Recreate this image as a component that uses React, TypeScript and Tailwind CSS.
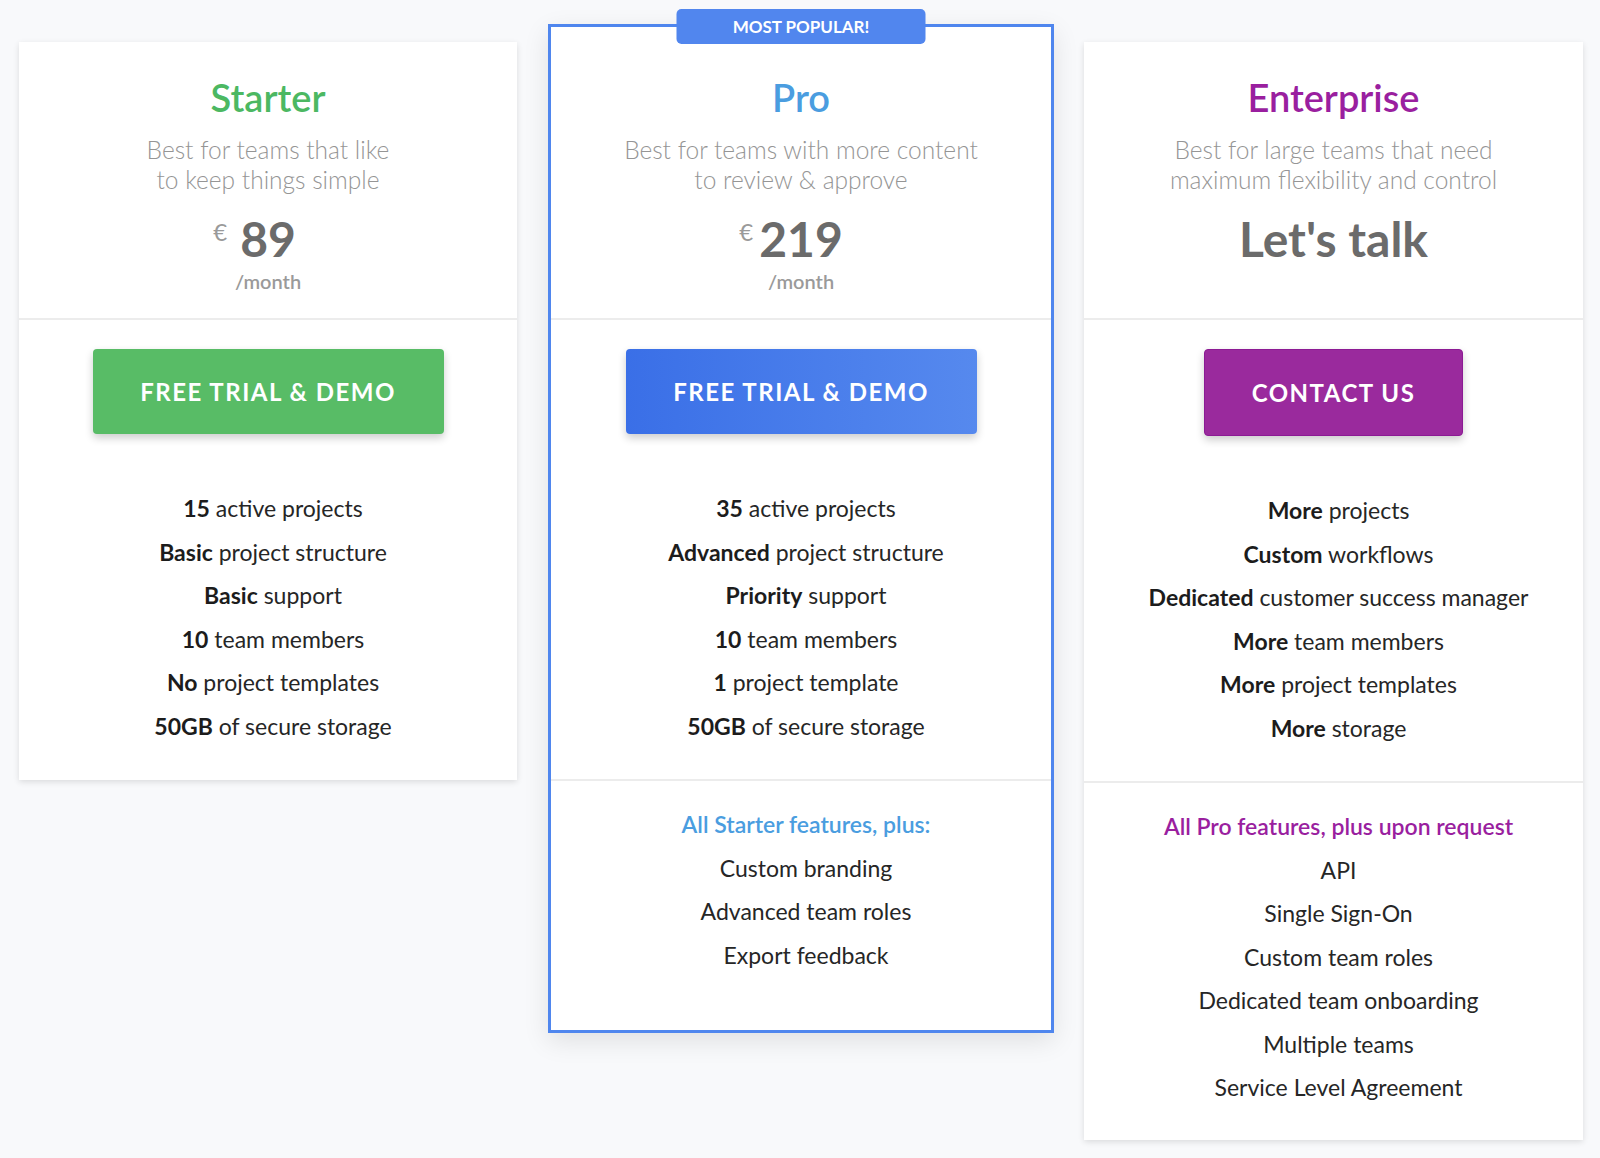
import React from "react";

type Feature = { b?: string; t: string };

const starterFeatures: Feature[] = [
  { b: "15", t: "active projects" },
  { b: "Basic", t: "project structure" },
  { b: "Basic", t: "support" },
  { b: "10", t: "team members" },
  { b: "No", t: "project templates" },
  { b: "50GB", t: "of secure storage" },
];

const proFeatures: Feature[] = [
  { b: "35", t: "active projects" },
  { b: "Advanced", t: "project structure" },
  { b: "Priority", t: "support" },
  { b: "10", t: "team members" },
  { b: "1", t: "project template" },
  { b: "50GB", t: "of secure storage" },
];

const entFeatures: Feature[] = [
  { b: "More", t: "projects" },
  { b: "Custom", t: "workflows" },
  { b: "Dedicated", t: "customer success manager" },
  { b: "More", t: "team members" },
  { b: "More", t: "project templates" },
  { b: "More", t: "storage" },
];

function FeatureList({ items }: { items: Feature[] }) {
  return (
    <ul className="mt-[53px] flex flex-col items-center pl-[10px]">
      {items.map((f, i) => (
        <li key={i} className="text-[23px] leading-[43.5px] text-[#262626]">
          {f.b && <span className="font-bold text-[#1c1c1c]">{f.b}</span>} {f.t}
        </li>
      ))}
    </ul>
  );
}

function ExtraList({ heading, color, items }: { heading: string; color: string; items: string[] }) {
  return (
    <div className="flex flex-col items-center pl-[10px]">
      <div className={`text-[23px] leading-[43.5px] font-semibold ${color}`}>{heading}</div>
      {items.map((t, i) => (
        <div key={i} className="text-[23px] leading-[43.5px] text-[#262626]">
          {t}
        </div>
      ))}
    </div>
  );
}

export default function App() {
  return (
    <div className="min-h-[1158px] w-full bg-[#f8f9fb] font-['Lato','Open_Sans',sans-serif]">
      <div className="flex items-start pl-[19px] pt-[24px]">
        {/* Starter */}
        <div className="mt-[18px] w-[498px] bg-white shadow-[0_2px_6px_rgba(0,0,0,0.12)]">
          <div className="flex h-[276px] flex-col items-center pt-[34px]">
            <h2 className="text-[38px] leading-[43px] font-semibold text-[#4cb862]">Starter</h2>
            <p className="mt-[16px] text-center text-[24.5px] leading-[30px] font-light text-[#959595]">
              Best for teams that like
              <br />
              to keep things simple
            </p>
            <div className="relative mt-[20px] h-[48px] text-[48px] leading-[48px] font-bold text-[#6b6b6b]">
              <span className="absolute right-full top-[5px] mr-[13px] text-[24px] leading-[24px] font-normal text-[#9a9a9a]">€</span>
              89
            </div>
            <div className="mt-[6px] text-[20px] leading-[24px] font-semibold text-[#9a9a9a]">/month</div>
          </div>
          <div className="border-t-2 border-[#ececec]" />
          <div className="flex flex-col items-center pb-[32px] pt-[29px]">
            <button className="h-[85px] w-[351px] rounded-[4px] bg-[#58bc66] text-[24px] font-bold tracking-[1.5px] text-white shadow-[0_4px_8px_rgba(0,0,0,0.2)]">
              FREE TRIAL &amp; DEMO
            </button>
            <FeatureList items={starterFeatures} />
          </div>
        </div>

        {/* Pro */}
        <div className="relative ml-[31px] w-[506px] border-[3px] border-[#4f86ee] bg-white shadow-[0_8px_24px_rgba(0,0,0,0.1)]">
          <div className="absolute left-1/2 top-[-18px] flex h-[35px] w-[249px] -translate-x-1/2 items-center justify-center rounded-[5px] bg-[#5186ee] text-[17px] font-bold text-white">
            MOST POPULAR!
          </div>
          <div className="flex h-[291px] flex-col items-center pt-[49px]">
            <h2 className="text-[38px] leading-[43px] font-semibold text-[#4a9de0]">Pro</h2>
            <p className="mt-[16px] text-center text-[24.5px] leading-[30px] font-light text-[#959595]">
              Best for teams with more content
              <br />
              to review &amp; approve
            </p>
            <div className="relative mt-[20px] h-[48px] text-[48px] leading-[48px] font-bold text-[#6b6b6b]">
              <span className="absolute right-full top-[5px] mr-[6px] text-[24px] leading-[24px] font-normal text-[#9a9a9a]">€</span>
              219
            </div>
            <div className="mt-[6px] text-[20px] leading-[24px] font-semibold text-[#9a9a9a]">/month</div>
          </div>
          <div className="border-t-2 border-[#ececec]" />
          <div className="flex flex-col items-center pb-[31px] pt-[29px]">
            <button className="h-[85px] w-[351px] rounded-[4px] bg-gradient-to-r from-[#3a6fe7] to-[#5689ee] text-[24px] font-bold tracking-[1.5px] text-white shadow-[0_4px_8px_rgba(0,0,0,0.2)]">
              FREE TRIAL &amp; DEMO
            </button>
            <FeatureList items={proFeatures} />
          </div>
          <div className="border-t-2 border-[#ececec]" />
          <div className="pb-[53px] pt-[22px]">
            <ExtraList
              heading="All Starter features, plus:"
              color="text-[#4a9de0]"
              items={["Custom branding", "Advanced team roles", "Export feedback"]}
            />
          </div>
        </div>

        {/* Enterprise */}
        <div className="ml-[30px] mt-[18px] w-[499px] bg-white shadow-[0_2px_6px_rgba(0,0,0,0.12)]">
          <div className="flex h-[276px] flex-col items-center pt-[34px]">
            <h2 className="text-[38px] leading-[43px] font-semibold text-[#9a1f9f]">Enterprise</h2>
            <p className="mt-[16px] text-center text-[24.5px] leading-[30px] font-light text-[#959595]">
              Best for large teams that need
              <br />
              maximum flexibility and control
            </p>
            <div className="mt-[20px] h-[48px] text-[48px] leading-[48px] font-bold text-[#6b6b6b]">Let's talk</div>
          </div>
          <div className="border-t-2 border-[#ececec]" />
          <div className="flex flex-col items-center pb-[31px] pt-[29px]">
            <button className="h-[87px] w-[259px] rounded-[4px] border border-[#8c1a94] bg-[#9a2a9d] text-[24px] font-bold tracking-[1.5px] text-white shadow-[0_4px_8px_rgba(0,0,0,0.2)]">
              CONTACT US
            </button>
            <FeatureList items={entFeatures} />
          </div>
          <div className="border-t-2 border-[#ececec]" />
          <div className="pb-[30px] pt-[22px]">
            <ExtraList
              heading="All Pro features, plus upon request"
              color="text-[#9a1f9f]"
              items={[
                "API",
                "Single Sign-On",
                "Custom team roles",
                "Dedicated team onboarding",
                "Multiple teams",
                "Service Level Agreement",
              ]}
            />
          </div>
        </div>
      </div>
    </div>
  );
}
